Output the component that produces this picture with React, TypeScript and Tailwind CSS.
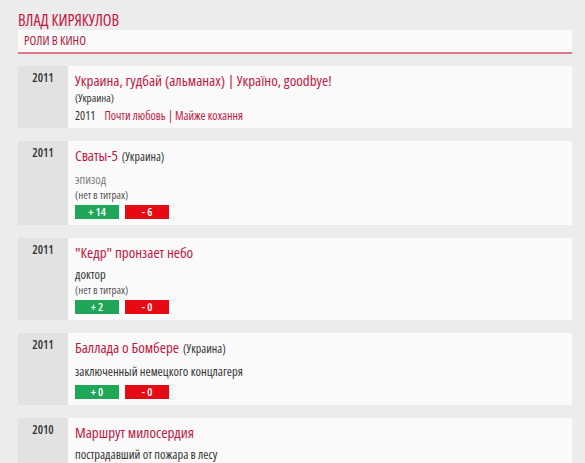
type Film = {
  year: string;
  title: string;
  country?: string;
  countryBelow?: boolean;
  role?: string;
  roleMuted?: boolean;
  uncredited?: boolean;
  extra?: { year: string; text: string };
  votes?: { up: number; down: number };
};

const films: Film[] = [
  {
    year: "2011",
    title: "Украина, гудбай (альманах) | Україно, goodbye!",
    country: "(Украина)",
    countryBelow: true,
    extra: { year: "2011", text: "Почти любовь | Майже кохання" },
  },
  {
    year: "2011",
    title: "Сваты-5",
    country: "(Украина)",
    role: "эпизод",
    roleMuted: true,
    uncredited: true,
    votes: { up: 14, down: 6 },
  },
  {
    year: "2011",
    title: "\"Кедр\" пронзает небо",
    role: "доктор",
    uncredited: true,
    votes: { up: 2, down: 0 },
  },
  {
    year: "2011",
    title: "Баллада о Бомбере",
    country: "(Украина)",
    role: "заключенный немецкого концлагеря",
    votes: { up: 0, down: 0 },
  },
  {
    year: "2010",
    title: "Маршрут милосердия",
    role: "пострадавший от пожара в лесу",
  },
];

function FilmCard({ film }: { film: Film }) {
  return (
    <div className="flex bg-[#fafafa]">
      {/* year column */}
      <div className="w-[50px] shrink-0 bg-[#e2e2e2] pt-[4px] text-center text-[12px] leading-4 font-semibold text-[#333]">
        {film.year}
      </div>

      <div className={film.extra ? "flex-1 pl-[7px] pr-3 pt-[4px] pb-[2px]" : "flex-1 pl-[7px] pr-3 pt-[4px] pb-[6px]"}>
        <div className="leading-[20px]">
          <a className="text-[15px] text-[#c3173f]">{film.title}</a>
          {film.country && !film.countryBelow && (
            <span className="ml-[4px] text-[12px] text-[#333]">{film.country}</span>
          )}
        </div>
        {film.country && film.countryBelow && (
          <div className="text-[11px] leading-4 text-[#333]">{film.country}</div>
        )}
        {film.extra && (
          <div className="flex gap-[9px] text-[12px] leading-[20px]">
            <span className="text-[#333]">{film.extra.year}</span>
            <a className="text-[#c3173f]">{film.extra.text}</a>
          </div>
        )}
        {film.role && (
          <div
            className={
              film.roleMuted
                ? "mt-[5px] text-[12.5px] leading-4 text-[#808080]"
                : "mt-[5px] text-[12.5px] leading-4 text-[#333]"
            }
          >
            {film.role}
          </div>
        )}
        {film.uncredited && (
          <div className="text-[11px] leading-[14px] text-[#555]">(нет в титрах)</div>
        )}
        {film.votes && (
          <div className={film.uncredited ? "mt-[3px] flex gap-[6px]" : "mt-[5px] flex gap-[6px]"}>
            <span className="flex h-[14px] w-[44px] items-center justify-center bg-[#1fa659] text-[11.5px] font-semibold text-white">
              + {film.votes.up}
            </span>
            <span className="flex h-[14px] w-[44px] items-center justify-center bg-[#e60a14] text-[11.5px] font-semibold text-white">
              - {film.votes.down}
            </span>
          </div>
        )}
      </div>
    </div>
  );
}

export default function App() {
  return (
    <div className="min-h-[463px] bg-[#ececec] pl-[18px] pt-[10px] font-['Open_Sans',sans-serif] font-stretch-condensed">
      <div className="w-[554px]">
        <h1 className="text-[16px] leading-[20px] text-[#c3173f]">ВЛАД КИРЯКУЛОВ</h1>

        <div className="h-[24px] border-b-2 border-[#d9788a] bg-[#fafafa] px-[6px] text-[12.5px] leading-[22px] text-[#b5163b]">
          РОЛИ В КИНО
        </div>

        <div className="mt-[12px] flex flex-col gap-[13px]">
          {films.map((f, i) => (
            <FilmCard key={i} film={f} />
          ))}
        </div>
      </div>
    </div>
  );
}
